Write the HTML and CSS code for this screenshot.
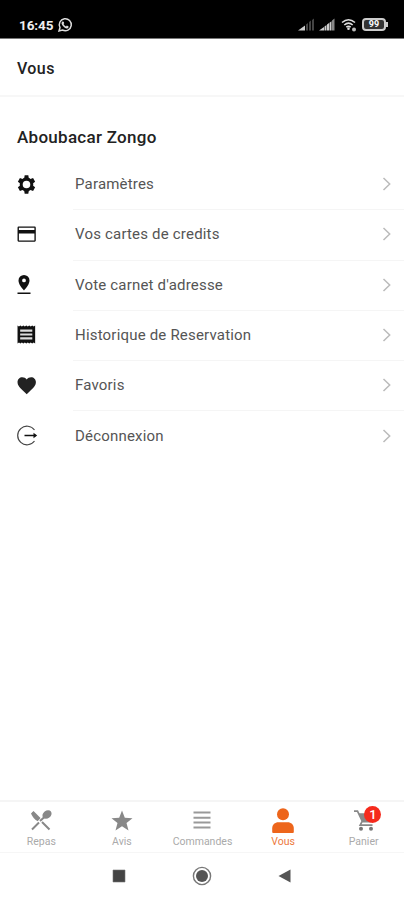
FILE: index.html
```
<!DOCTYPE html>
<html lang="fr">
<head>
<meta charset="utf-8">
<title>Vous</title>
<link rel="stylesheet" href="styles.css">
</head>
<body>
<div class="status">
  <span class="time">16:45</span>
  <svg class="whatsapp" viewBox="0 0 16 16"><path d="M2 14l1-3.500A6 6 0 1 1 5.500 13z" fill="none" stroke="#ddd" stroke-width="1.500"/><path d="M5.300 4.500l1.400.2.5 1.600-.7.8c.6 1.200 1.400 1.900 2.500 2.400l.9-.9 1.700.8c0 1.500-1 2-2 2C7.300 11 4.600 8.200 4.500 6z" fill="#ddd"/></svg>
  <span class="space"></span>
  <svg class="signal" viewBox="0 0 17 13"><path d="M0 12.500L7 7.500v5z" fill="#ccc"/><path d="M8 6.500l2-1.500v7.500H8zM11 4l2-1.500v10h-2zM14 2l2-1.500v12h-2z" fill="#444"/></svg>
  <svg class="signal second" viewBox="0 0 17 13"><path d="M0 12.500L5 9v3.500zM5.500 8.500l2-1.500v5.500h-2zM8 6.500l2-1.500v7.500H8zM10.500 4.700l2-1.500v9.300h-2z" fill="#ccc"/><path d="M13 2.500l2.500-2v12H13z" fill="#888"/></svg>
  <svg class="wifi" viewBox="0 0 16 14"><g fill="none" stroke="#ddd" stroke-width="1.600"><path d="M1 4.500Q7.500-1 14 4.500M3.300 7Q7.500 3.300 11.700 7M5.300 9.200Q7.500 7.500 9.700 9.200"/></g><circle cx="7.500" cy="10.700" r="1.300" fill="#ddd"/><circle cx="13" cy="11.500" r="2" fill="#bbb"/></svg>
  <span class="battery">99</span>
</div>
<header class="header">Vous</header>
<main class="content">
  <h1 class="name">Aboubacar Zongo</h1>
  <div class="row">
    <svg class="icon" viewBox="0 0 24 24"><path fill-rule="evenodd" d="M20.400 13.500a8.500 8.500 0 0 0 0-3l2.500-2-2.600-4.700-3.200 1.200a9 9 0 0 0-2.300-1.400L14.300.300H9.700l-.5 3.300A9 9 0 0 0 6.900 5L3.700 3.800 1.100 8.500l2.500 2a8.500 8.500 0 0 0 0 3l-2.500 2 2.600 4.700L6.900 19a9 9 0 0 0 2.300 1.400l.5 3.300h4.600l.5-3.300a9 9 0 0 0 2.300-1.400l3.200 1.200 2.600-4.700zM12 16.800a4.800 4.800 0 1 1 0-9.600 4.800 4.800 0 0 1 0 9.600z"/></svg>
    <span class="label">Paramètres</span><svg class="chevron" viewBox="0 0 10 14"><path d="M1.500 1l6.200 6-6.200 6"/></svg>
  </div>
  <div class="row">
    <svg class="icon" viewBox="0 0 18 18"><path fill-rule="evenodd" d="M1.500 1.500h15.300q1 0 1 1v12.300q0 1-1 1H1.500q-1 0-1-1V2.500q0-1 1-1zm.3 1.100v2.200h14.700V2.600zm0 5.500v6.600h14.700V8.100z"/></svg>
    <span class="label">Vos cartes de credits</span><svg class="chevron" viewBox="0 0 10 14"><path d="M1.500 1l6.200 6-6.200 6"/></svg>
  </div>
  <div class="row">
    <svg class="icon pin" viewBox="0 0 14 20"><path fill-rule="evenodd" d="M7 0a5.500 5.500 0 0 1 5.500 5.500C12.500 9 9.500 12.500 7 15.500 4.500 12.500 1.500 9 1.500 5.500A5.500 5.500 0 0 1 7 0zm0 3.500a1.900 1.900 0 1 0 0 3.800 1.900 1.900 0 0 0 0-3.800zM.5 17.400h13v1.700H.5z"/></svg>
    <span class="label">Vote carnet d'adresse</span><svg class="chevron" viewBox="0 0 10 14"><path d="M1.500 1l6.200 6-6.200 6"/></svg>
  </div>
  <div class="row">
    <svg class="icon receipt" viewBox="0 0 18 18"><path d="M.5.500l1.300 1L3.200.5l1.400 1L6 .5l1.400 1 1.400-1 1.400 1 1.400-1 1.400 1 1.400-1 1.400 1 1.400-1v17l-1.400-1-1.400 1-1.400-1-1.400 1-1.400-1-1.400 1-1.400-1-1.400 1-1.400-1-1.400 1-1.300-1-1.400 1z"/><path d="M3 5.300h11.500M3 9h11.500M3 12.700h11.500" stroke="#ddd" stroke-width="2"/></svg>
    <span class="label">Historique de Reservation</span><svg class="chevron" viewBox="0 0 10 14"><path d="M1.500 1l6.200 6-6.200 6"/></svg>
  </div>
  <div class="row">
    <svg class="icon" viewBox="0 0 18 18"><path d="M9.200 17.200L7.500 15.600C2.500 11.300.5 9 .5 5.800.5 3.200 2.500 1.200 5 1.200c1.700 0 3.200.8 4.200 2.100 1-1.300 2.500-2.100 4.200-2.100 2.500 0 4.500 2 4.500 4.600 0 3.200-2 5.500-7 9.800z" fill="#222"/></svg>
    <span class="label">Favoris</span><svg class="chevron" viewBox="0 0 10 14"><path d="M1.500 1l6.200 6-6.200 6"/></svg>
  </div>
  <div class="row">
    <svg class="icon logout" viewBox="0 0 21 21"><path d="M17.500 5a9.300 9.300 0 1 0 0 11" fill="none" stroke="#444" stroke-width="1.200"/><path d="M7.500 10.500h11" stroke="#111" stroke-width="1.500"/><path d="M16.500 7.800l3.700 2.700-3.700 2.700z"/></svg>
    <span class="label">Déconnexion</span><svg class="chevron" viewBox="0 0 10 14"><path d="M1.500 1l6.200 6-6.200 6"/></svg>
  </div>
</main>
<nav class="tabs">
  <div class="tab"><svg class="tab-icon" viewBox="0 0 24 24"><path d="M3.500 3.500l6.700 6.800M10 13.500l-7 7M13 13l7.500 7.500M11 12l5-4.500" fill="none" stroke="#888" stroke-width="2"/><path d="M2 4.500L4.500 2l7 7-2.800 3.200C6 11 3.500 8 2 4.500z" fill="#888"/><ellipse cx="18" cy="5.500" rx="5" ry="3.800" transform="rotate(-38 18 5.500)" fill="#888"/></svg><span>Repas</span></div>
  <div class="tab"><svg class="tab-icon" viewBox="0 0 24 24"><path d="M12 1.500l2.800 7.300 7.700.4-6 4.800 2 7.400-6.500-4.200-6.500 4.200 2-7.400-6-4.800 7.700-.4z" fill="#888"/></svg><span>Avis</span></div>
  <div class="tab"><svg class="tab-icon" viewBox="0 0 24 24"><path d="M3.500 3.500h17M3.500 8.700h17M3.500 13.500h17M3.500 18.500h17" stroke="#999" stroke-width="2"/></svg><span>Commandes</span></div>
  <div class="tab active"><svg class="tab-icon" viewBox="0 0 24 24"><circle cx="12" cy="5.300" r="6"/><path d="M1.200 23v-3.500c0-4 3-6.200 6-6.200h9.600c3 0 6 2.200 6 6.200V23q0 1-1 1H2.200q-1 0-1-1z"/></svg><span>Vous</span></div>
  <div class="tab"><svg class="tab-icon" viewBox="0 0 24 24"><path d="M2 2.200h3.500l5 10.500h8l4-7.500H7.200M10 12.700l-1.800 3.400h12.300" fill="none" stroke="#888" stroke-width="1.700"/><path d="M7 5h15l-4 7.500h-7.500z" fill="#888"/><circle cx="9" cy="19.700" r="2" fill="#777"/><circle cx="19" cy="19.700" r="2" fill="#777"/></svg><span>Panier</span><b class="badge">1</b></div>
</nav>
<footer class="system">
  <svg viewBox="0 0 24 24"><path d="M6 6h12v12H6z" fill="#444" stroke="#777" stroke-width=".6"/></svg>
  <svg viewBox="0 0 24 24"><circle cx="12" cy="12" r="8.600" fill="none" stroke="#777" stroke-width="1.400"/><circle cx="12" cy="12" r="6" fill="#555"/></svg>
  <svg viewBox="0 0 24 24"><path d="M5.500 12l12-6.500v13z" fill="#555"/></svg>
</footer>
</body>
</html>
```
FILE: styles.css
```
* { box-sizing: border-box; }
body { margin: 0; width: 404px; height: 900px; overflow: hidden; display: flex; flex-direction: column; background: #fff; color: #222; font-family: Roboto, sans-serif; }
svg { display: block; flex: none; }
.status { height: 39px; flex: none; background: #000; border-bottom: 1px solid #777; display: flex; align-items: flex-start; padding: 17px 15px 0 19px; }
.time { color: #eee; font-size: 13.500px; line-height: 16px; font-weight: 700; width: 38px; letter-spacing: -.1px; }
.whatsapp { width: 16px; height: 16px; }
.space { flex: 1; }
.signal { width: 17px; height: 13px; margin-top: 1px; margin-right: 4px; }
.second { margin-right: 5px; }
.wifi { width: 16px; height: 14px; margin: 1px 5px 0 0; }
.battery { position: relative; width: 24px; height: 13px; margin: 1px 3px 0 0; border: 2px solid #ccc; border-radius: 4px; background: #333; color: #fff; font-size: 9px; line-height: 9px; font-weight: 700; text-align: center; }
.battery::after { content: ""; position: absolute; right: -4px; top: 2px; width: 2px; height: 5px; background: #ccc; }
.header { height: 58px; flex: none; border-bottom: 2px solid #f7f7f7; padding: 1px 17px 0; line-height: 57px; font-size: 16px; font-weight: 500; letter-spacing: .4px; }
.content { flex: 1; padding-top: 28px; }
.name { margin: 0 0 9px 17px; line-height: 25px; font-size: 17px; font-weight: 500; letter-spacing: .28px; }
.row { position: relative; height: 50.300px; display: flex; align-items: center; padding: 0 12px 0 17px; }
.row + .row::before { content: ""; position: absolute; top: 0; left: 73px; right: 0; height: 1px; background: #f5f5f5; }
.icon { width: 19px; height: 19px; fill: #111; }
.pin { width: 14px; height: 20px; margin-right: 5px; }
.receipt { margin-top: -1px; }
.logout { width: 21px; height: 21px; margin-right: -2px; }
.label { flex: 1; margin-left: 39px; font-size: 15px; line-height: 20px; color: #555; letter-spacing: .19px; }
.chevron { width: 10px; height: 14px; fill: none; stroke: #bbb; stroke-width: 1.500; }
.tabs { height: 53px; flex: none; border-top: 2px solid #f5f5f5; border-bottom: 1px solid #f6f6f6; display: grid; grid-template-columns: repeat(5, 1fr); padding-left: 1px; }
.tab { position: relative; display: flex; flex-direction: column; align-items: center; padding-top: 7px; color: #aaa; font-size: 10.500px; line-height: 14px; letter-spacing: 0; }
.tab-icon { width: 24px; height: 24px; margin-bottom: 2px; overflow: visible; }
.active { color: #ed7940; }
.active .tab-icon { fill: #ed651b; }
.badge { position: absolute; left: 41px; top: 4px; width: 17px; height: 17px; border-radius: 50%; background: #f52a1c; color: #fff; font-size: 13px; line-height: 17px; text-align: center; font-weight: 500; letter-spacing: 0; }
.system { height: 47px; flex: none; display: flex; justify-content: center; align-items: center; gap: 59px; padding-bottom: 1px; }
.system svg { width: 24px; height: 24px; }
```
